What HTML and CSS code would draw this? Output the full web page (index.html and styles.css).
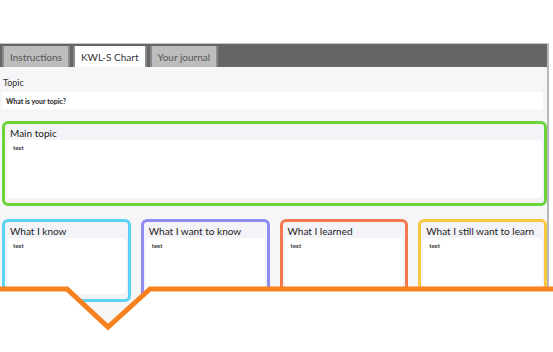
FILE: index.html
```html
<!DOCTYPE html>
<html lang="en">
<head>
    <meta charset="UTF-8">
    <title>KWL-S Chart</title>
    <link rel="stylesheet" href="styles.css">
</head>
<body>

<div class="app">
    <div class="tabs">
        <div class="tab">Instructions</div>
        <div class="tab active">KWL-S Chart</div>
        <div class="tab">Your journal</div>
    </div>

    <div class="panel">
        <div class="topic">
            <div class="label">Topic</div>
            <div class="field">What is your topic?</div>
        </div>

        <div class="box main">
            <div class="box-title">Main topic</div>
            <div class="area">text</div>
        </div>

        <div class="cards">
            <div class="box card know">
                <div class="box-title">What I know</div>
                <div class="area">text</div>
            </div>
            <div class="box card want">
                <div class="box-title">What I want to know</div>
                <div class="area">text</div>
            </div>
            <div class="box card learned">
                <div class="box-title">What I learned</div>
                <div class="area">text</div>
            </div>
            <div class="box card still">
                <div class="box-title">What I still want to learn</div>
                <div class="area">text</div>
            </div>
        </div>
    </div>
</div>

<svg class="overlay" width="553" height="352" viewBox="0 0 553 352">
    <path d="M0 289 L67 289 L108 327 L150 289 L553 289 L553 352 L0 352 Z" fill="#fff"/>
    <polyline points="-2,289 67,289 108,327 150,289 555,289" fill="none" stroke="#f5821f" stroke-width="5"/>
</svg>

</body>
</html>
```

FILE: styles.css
```css
body {
    margin: 0;
    padding: 0;
    background: #fff;
    font-family: Lato, "Open Sans", sans-serif;
    color: #222;
    position: relative;
    height: 352px;
    overflow: hidden;
}
.app {
    margin-top: 43px;
    width: 547px;
    border-top: 1px solid #c8c8c8;
    border-right: 2px solid #b8b8b8;
}
.tabs {
    background: #666;
    height: 23px;
    display: flex;
    align-items: flex-end;
    gap: 3px;
    padding-left: 2px;
}
.tab {
    height: 21px;
    box-sizing: border-box;
    padding: 0 6px;
    background: #bdbdbd;
    border-left: 2px solid #8a8a8a;
    border-right: 2px solid #8a8a8a;
    font-size: 10px;
    color: #555;
    display: flex;
    align-items: center;
}
.tab.active {
    background: #fff;
    color: #333;
}
.panel {
    background: #f6f6f8;
    padding: 10px 0 30px 2px;
}
.topic {
    padding-right: 4px;
}
.label {
    font-size: 9px;
    color: #333;
    padding-left: 1px;
}
.field {
    background: #fff;
    margin-top: 4px;
    height: 17px;
    font-size: 7px;
    font-weight: bold;
    padding-left: 4px;
    display: flex;
    align-items: center;
}
.box {
    border: 3px solid #6bd43d;
    border-radius: 6px;
    background: #f4f4f8;
    padding: 3px 2px 5px 2px;
}
.box-title {
    font-size: 10px;
    color: #222;
    padding: 0 3px 1px;
}
.area {
    background: #fff;
    border-radius: 4px;
    font-size: 6px;
    font-weight: bold;
    padding: 4px 6px;
    color: #333;
}
.main {
    margin-top: 12px;
}
.main .area {
    height: 50px;
}
.cards {
    margin-top: 13px;
    display: grid;
    grid-template-columns: repeat(4, 1fr);
    gap: 10px;
}
.card .area {
    height: 48px;
}
.know { border-color: #5dd3f2; }
.want { border-color: #8d8cf2; }
.learned { border-color: #f47a4d; }
.still { border-color: #f6c83f; }
.overlay {
    position: absolute;
    left: 0;
    top: 0;
}
```
